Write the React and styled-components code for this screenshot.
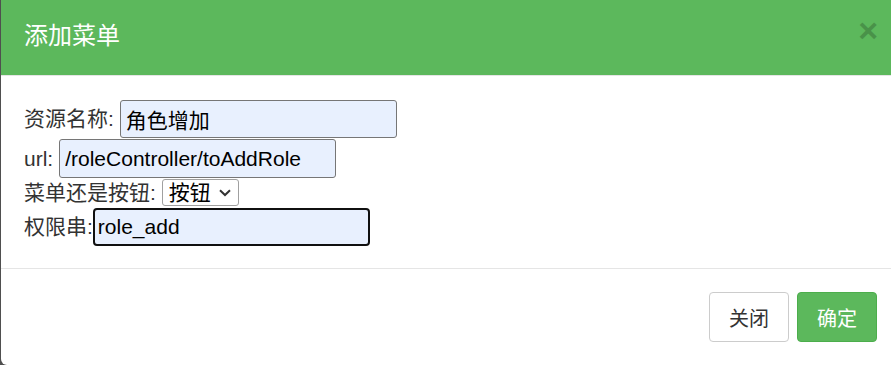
import React from "react";
import styled, { createGlobalStyle } from "styled-components";

const Global = createGlobalStyle`
  html, body { margin: 0; padding: 0; background: #4f4f4f; }
  body { font-family: "Liberation Sans", "Noto Sans CJK SC", sans-serif; }
  * { box-sizing: border-box; }
`;

const Modal = styled.div`
  margin-left: 1px;
  width: 890px;
  height: 365px;
  background: #fff;
  border-bottom-left-radius: 6px;
  overflow: hidden;
  display: flex;
  flex-direction: column;
`;

const Header = styled.div`
  height: 76px;
  background: #5cb85c;
  border-bottom: 1px solid #e5e5e5;
  display: flex;
  align-items: center;
  justify-content: space-between;
  padding: 0 13px 4px 23px;
`;

const Title = styled.h4`
  margin: 0;
  font-size: 24px;
  font-weight: normal;
  color: #fff;
  line-height: 1;
`;

const Close = styled.button`
  align-self: flex-start;
  margin-top: 13px;
  border: 0;
  background: transparent;
  padding: 0;
  font-family: "Liberation Sans", sans-serif;
  font-size: 34px;
  font-weight: bold;
  line-height: 1;
  color: #000;
  opacity: 0.2;
  cursor: pointer;
`;

const Body = styled.div`
  height: 193px;
  border-bottom: 1px solid #e5e5e5;
  padding: 24px 0 0 23px;
  display: flex;
  flex-direction: column;
`;

const Row = styled.div`
  display: flex;
  align-items: center;
  margin-bottom: ${(p) => p.$mb || 0}px;
  font-size: 21px;
  line-height: 24px;
  color: #333;
  white-space: pre;
`;

const Label = styled.span`
  margin-right: ${(p) => (p.$tight ? 0 : 6)}px;
`;

const Input = styled.input`
  width: 277px;
  height: ${(p) => p.$h || 38}px;
  font-family: "Liberation Sans", "Noto Sans CJK SC", sans-serif;
  font-size: 21px;
  color: #000;
  background: #e8f0fe;
  border: ${(p) => (p.$focused ? "2px solid #101010" : "1px solid #767676")};
  border-radius: ${(p) => (p.$focused ? 4 : 3)}px;
  padding: 0 ${(p) => (p.$focused ? 3 : 5)}px;
  outline: none;
`;

const SelectWrap = styled.span`
  position: relative;
  display: inline-flex;
`;

const Select = styled.select`
  appearance: none;
  width: 77px;
  height: 27px;
  font-family: "Liberation Sans", "Noto Sans CJK SC", sans-serif;
  font-size: 21px;
  line-height: 25px;
  color: #000;
  background: #fff;
  border: 1px solid #a0a0a0;
  border-radius: 3px;
  padding: 0 0 0 6px;
`;

const Chevron = styled.svg`
  position: absolute;
  right: 8px;
  top: 10px;
  pointer-events: none;
`;

const Footer = styled.div`
  flex: 1;
  display: flex;
  justify-content: flex-end;
  align-items: flex-start;
  gap: 8px;
  padding: 23px 14px 0 0;
`;

const Button = styled.button`
  width: 80px;
  height: 50px;
  font-family: "Liberation Sans", "Noto Sans CJK SC", sans-serif;
  font-size: 20px;
  border-radius: 4px;
  border: 1px solid ${(p) => (p.$primary ? "#4cae4c" : "#ccc")};
  background: ${(p) => (p.$primary ? "#5cb85c" : "#fff")};
  color: ${(p) => (p.$primary ? "#fff" : "#333")};
  cursor: pointer;
`;

export default function App() {
  return (
    <>
      <Global />
      <Modal>
        <Header>
          <Title>添加菜单</Title>
          <Close>×</Close>
        </Header>
        <Body>
          <Row $mb={1}>
            <Label>资源名称:</Label>
            <Input defaultValue="角色增加" />
          </Row>
          <Row $mb={1}>
            <Label>url:</Label>
            <Input $h={39} defaultValue="/roleController/toAddRole" />
          </Row>
          <Row $mb={2}>
            <Label>菜单还是按钮:</Label>
            <SelectWrap>
              <Select defaultValue="按钮">
                <option>菜单</option>
                <option>按钮</option>
              </Select>
              <Chevron width="12" height="8" viewBox="0 0 12 8">
                <path d="M1 1.2 L6 6 L11 1.2" fill="none" stroke="#333" strokeWidth="2" />
              </Chevron>
            </SelectWrap>
          </Row>
          <Row>
            <Label $tight>权限串:</Label>
            <Input $focused defaultValue="role_add" />
          </Row>
        </Body>
        <Footer>
          <Button>关闭</Button>
          <Button $primary>确定</Button>
        </Footer>
      </Modal>
    </>
  );
}
